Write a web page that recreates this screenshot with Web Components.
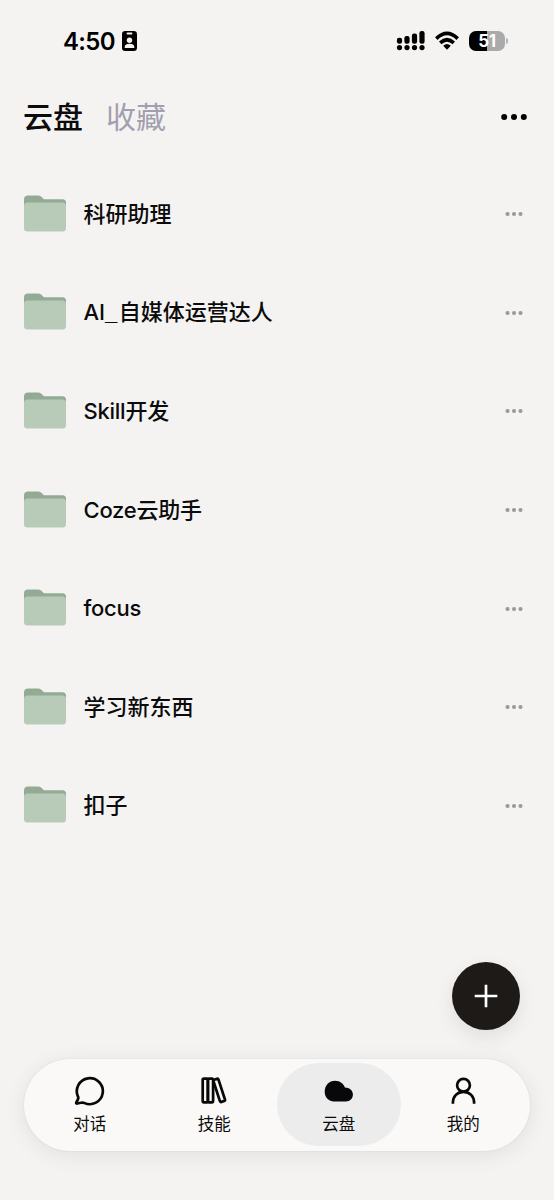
<!DOCTYPE html>
<html lang="zh-CN">
<head>
<meta charset="utf-8">
<title>云盘</title>
<style>
html,body{margin:0;height:100%;background:#f4f3f2}
body{font-family:Inter,"Noto Sans CJK SC",sans-serif;color:#0b0b0b}
</style>
</head>
<body>
<drive-app></drive-app>
<script>
const define=(name,html,setup)=>customElements.define(name,class extends HTMLElement{
  constructor(){super();this.attachShadow({mode:'open'}).innerHTML=html;}
  connectedCallback(){if(setup)setup(this,this.shadowRoot);}
});

define('status-bar',`<style>
:host{display:flex;height:82px;box-sizing:border-box;padding:0 46px 0 63px;align-items:center;color:#000}
.time{padding-top:2px;font-size:24px;font-weight:600;line-height:30px;letter-spacing:-.7px;width:58px;white-space:nowrap}
svg{display:block;flex:none}
.space{flex:1}
.wifi{margin-left:10px}
.battery{display:grid;width:36px;height:20px;margin-left:10px;border-radius:7px;background:linear-gradient(90deg,#000 18.4px,#aaa 18.4px);color:#fff;font-size:17px;font-weight:700;line-height:20px;text-align:center;letter-spacing:-.3px}
.cap{width:2px;height:6px;margin-left:1px;border-radius:0 2px 2px 0;background:#b5b5b5}
</style>
<span class="time">4:50</span>
<svg width="17" height="22" viewBox="0 0 17 22"><rect x="1" y="1" width="15" height="20" rx="3.2" fill="#000"/><rect x="5.6" y="2.6" width="5.8" height="1.8" rx=".9" fill="#f4f3f2"/><circle cx="8.5" cy="10.2" r="2.7" fill="#f4f3f2"/><path d="M3.7 18v-1c0-2 2-3.2 4.8-3.2s4.8 1.2 4.8 3.2v1z" fill="#f4f3f2"/></svg>
<span class="space"></span>
<svg width="29" height="22" viewBox="0 0 29 22" fill="#000"><rect x=".9" y="7.8" width="5.2" height="6" rx="2.2"/><rect x="8.4" y="6.1" width="5.2" height="7.7" rx="2.2"/><rect x="15.9" y="3.6" width="5.2" height="10.2" rx="2.2"/><rect x="23.4" y="1" width="5.2" height="12.8" rx="2.2"/><circle cx="3.5" cy="17.6" r="2.6"/><circle cx="11" cy="17.6" r="2.6"/><circle cx="18.5" cy="17.6" r="2.6"/><circle cx="26" cy="17.6" r="2.6"/></svg>
<svg class="wifi" width="24" height="20" viewBox="0 0 24 20" fill="none" stroke="#000" stroke-width="3.6"><path d="M1.3 7.6Q12-2.8 22.7 7.6"/><path d="M5.2 11.9Q12 5.6 18.8 11.9"/><path d="M8.2 14.8Q12 11.3 15.8 14.8L12 18.7Z" fill="#000" stroke="none"/></svg>
<span class="battery">51</span><span class="cap"></span>`);

define('drive-header',`<style>
:host{display:flex;height:70px;box-sizing:border-box;padding:0 27px 0 23px;align-items:center}
b,span{font-size:30px;line-height:44px;font-weight:500}
span{margin-left:23px;color:#a29faf;font-weight:400}
svg{margin-left:auto}
</style><b>云盘</b><span>收藏</span>
<svg width="26" height="8" viewBox="0 0 26 8"><circle cx="3.2" cy="4" r="3"/><circle cx="13" cy="4" r="3"/><circle cx="22.8" cy="4" r="3"/></svg>`);

define('folder-row',`<style>
:host{display:flex;height:98.6px;box-sizing:border-box;padding:0 31px 0 24px;align-items:center}
.label{margin-left:17.5px;padding-top:1px;font-size:22px;line-height:32px;font-weight:450}
:host([tight]) .label{letter-spacing:-.25px}
.more{margin:2px 0 0 auto}
svg{display:block;flex:none}
::slotted(i){font-family:"Liberation Sans",sans-serif;font-style:normal;font-weight:700;letter-spacing:1.4px}
</style>
<svg width="42" height="37" viewBox="0 0 42 37"><path d="M0 4.5Q0 .5 4 .5H14.5Q16.5 .5 17.7 2L19.3 3.7Q20 4.3 21 4.3H38.5Q42 4.3 42 7.8V24H0z" fill="#93aa95"/><rect y="7.5" width="42" height="29" rx="3.5" fill="#b7cbb8"/></svg>
<span class="label"><slot></slot></span>
<svg class="more" width="18" height="6" viewBox="0 0 18 6" fill="#999"><circle cx="2.5" cy="3" r="2.05"/><circle cx="9" cy="3" r="2.05"/><circle cx="15.5" cy="3" r="2.05"/></svg>`);

define('add-button',`<style>
:host{display:block;width:68px;height:68px;border-radius:50%;background:#1d1a17;box-shadow:0 7px 18px #5c46401c}
svg{display:block}
</style><svg width="68" height="68" viewBox="0 0 68 68" stroke="#fff" stroke-width="2.7"><path d="M34 22.7V45.3M22.7 34H45.3"/></svg>`);

const icons={
 chat:'<path d="M4.1 21.8A13 13 0 1 1 10.2 27.9Q8.6 27.3 6.8 27.8L3.3 28.5Q1.9 28.7 2.3 27.5L3.9 24.5Q4.6 23.1 4.1 21.8Z"/>',
 skills:'<rect x="3.7" y="3.7" width="5.2" height="23.6" rx="1.2"/><rect x="8.9" y="3.7" width="5.2" height="23.6" rx="1.2"/><rect x="17.6" y="3.7" width="5.3" height="23.3" rx="1.2" transform="rotate(-18 20.3 15.5)"/>',
 cloud:'<path d="M11 26.4C5.7 26.4 1.7 22.6 1.7 16.8C1.7 10.3 6.2 5.7 12.1 5.7C16.7 5.7 20.5 8.5 21.9 12.4C26.6 12.4 29.9 15.3 29.9 19.4C29.9 23.5 27 26.4 22.8 26.4Z" fill="#080709" stroke="none"/>',
 user:'<circle cx="15.5" cy="10.2" r="6.4"/><path d="M4.9 28.7V27.6C4.9 21.3 9.3 16.8 15.5 16.8S26.1 21.3 26.1 27.6V28.7"/>'
};
define('nav-item',`<style>
:host{display:flex;flex:1;flex-direction:column;align-items:center;border-radius:42px;padding-top:12px;box-sizing:border-box}
:host([active]){background:#ececed}
svg{display:block}
span{margin-top:6px;font-size:16.5px;line-height:24px}
</style><svg width="31" height="31" viewBox="0 0 31 31" fill="none" stroke="#080808" stroke-width="2.7" stroke-linejoin="round"></svg><span><slot></slot></span>`,
(host,root)=>{root.querySelector('svg').innerHTML=icons[host.getAttribute('icon')];});

define('bottom-nav',`<style>
:host{display:flex;height:92px;box-sizing:border-box;padding:4.5px 4px;border-radius:46px;background:#faf9f8;box-shadow:0 0 2px #00000018,0 4px 22px #00000014}
</style><slot></slot>`);

define('drive-app',`<style>
:host{display:flex;flex-direction:column;width:100%;max-width:554px;height:1200px;overflow:hidden;background:#f4f3f2}
main{margin-top:12px;height:690px}
add-button{align-self:flex-end;margin:107.5px 34px 29px 0}
bottom-nav{margin:0 24.5px 0 23.5px}
</style>
<status-bar></status-bar><drive-header></drive-header>
<main><folder-row>科研助理</folder-row><folder-row>AI<i>_</i>自媒体运营达人</folder-row><folder-row tight>Skill开发</folder-row><folder-row tight>Coze云助手</folder-row><folder-row tight>focus</folder-row><folder-row>学习新东西</folder-row><folder-row>扣子</folder-row></main>
<add-button></add-button>
<bottom-nav><nav-item icon="chat">对话</nav-item><nav-item icon="skills">技能</nav-item><nav-item icon="cloud" active>云盘</nav-item><nav-item icon="user">我的</nav-item></bottom-nav>`);
</script>
</body>
</html>
